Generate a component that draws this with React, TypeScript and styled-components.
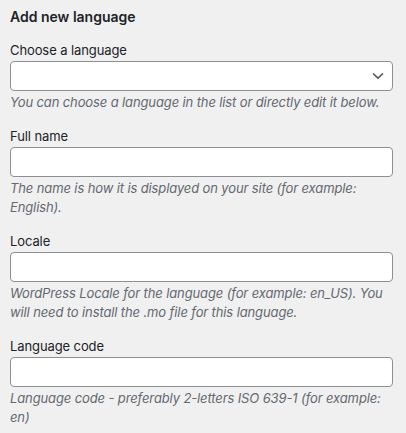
import React from "react";
import styled, { createGlobalStyle } from "styled-components";

const Global = createGlobalStyle`
  html, body {
    margin: 0;
    padding: 0;
    background: #f0f0f1;
  }
  body {
    font-family: Inter, "Liberation Sans", Arial, sans-serif;
    font-size: 13px;
    color: #1d2327;
  }
`;

const Panel = styled.div`
  padding: 7px 13px 0 10px;
  display: flex;
  flex-direction: column;
`;

const Heading = styled.h2`
  margin: 0 0 14px;
  font-size: 14px;
  line-height: 20px;
  font-weight: 600;
  color: #1d2327;
`;

const Field = styled.div`
  display: flex;
  flex-direction: column;
  margin-bottom: 15.5px;
`;

const Label = styled.label`
  display: block;
  font-size: 13px;
  line-height: 18px;
  letter-spacing: -0.1px;
  color: #1d2327;
  margin-bottom: 2px;
`;

const SelectWrap = styled.div`
  position: relative;
  height: 30px;
  box-sizing: border-box;
  border: 1px solid #8c8f94;
  border-radius: 4px;
  background: #fff;
`;

const Chevron = styled.svg`
  position: absolute;
  right: 8px;
  top: 50%;
  transform: translateY(-50%);
`;

const Input = styled.input`
  display: block;
  box-sizing: border-box;
  width: 100%;
  height: 30px;
  margin: 0;
  border: 1px solid #8c8f94;
  border-radius: 4px;
  background: #fff;
  padding: 0 8px;
  font: inherit;
  outline: none;
`;

const Description = styled.p`
  margin: 1.5px 0 0;
  font-size: 13px;
  line-height: 19px;
  letter-spacing: -0.12px;
  font-style: italic;
  color: #646970;
`;

type FieldProps = {
  label: string;
  description: string;
  select?: boolean;
};

function FormField({ label, description, select }: FieldProps) {
  return (
    <Field>
      <Label>{label}</Label>
      {select ? (
        <SelectWrap>
          <Chevron width="12" height="8" viewBox="0 0 12 8" fill="none">
            <path d="M1 1.5 L6 6.2 L11 1.5" stroke="#50575e" strokeWidth="1.6" />
          </Chevron>
        </SelectWrap>
      ) : (
        <Input type="text" />
      )}
      <Description>{description}</Description>
    </Field>
  );
}

export default function App() {
  return (
    <>
      <Global />
      <Panel>
        <Heading>Add new language</Heading>
        <FormField
          select
          label="Choose a language"
          description="You can choose a language in the list or directly edit it below."
        />
        <FormField
          label="Full name"
          description="The name is how it is displayed on your site (for example: English)."
        />
        <FormField
          label="Locale"
          description="WordPress Locale for the language (for example: en_US). You will need to install the .mo file for this language."
        />
        <FormField
          label="Language code"
          description="Language code - preferably 2-letters ISO 639-1 (for example: en)"
        />
      </Panel>
    </>
  );
}
